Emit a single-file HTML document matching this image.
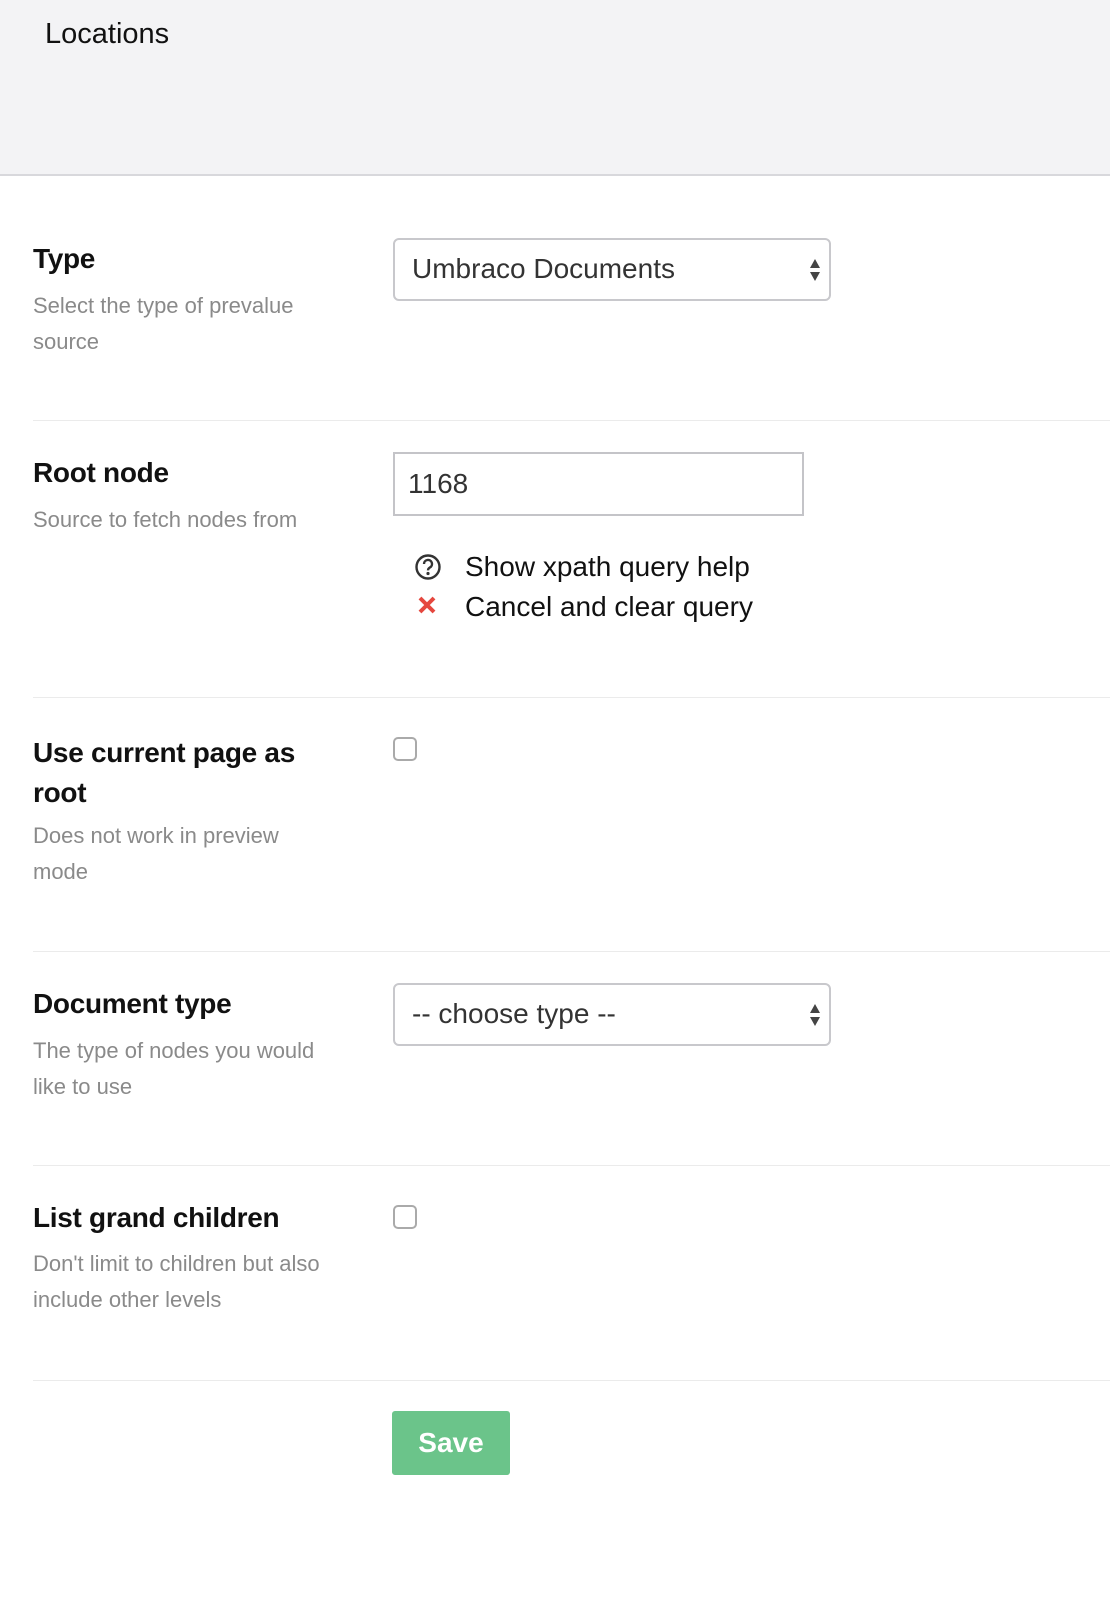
<!DOCTYPE html>
<html><head><meta charset="utf-8"><style>
*{box-sizing:border-box;margin:0;padding:0}
body{width:1110px;height:1602px;background:#fff;font-family:"Liberation Sans",sans-serif;color:#1b1b1b;position:relative;overflow:hidden}
.hdr{position:absolute;left:0;top:0;width:1110px;height:176px;background:#f3f3f5;border-bottom:2px solid #d8d8dc}
.hdr span{position:absolute;left:45px;top:18px;font-size:29px;color:#111}
.a{position:absolute;white-space:nowrap}
.lbl{font-size:28px;font-weight:bold;color:#111;letter-spacing:-0.3px}
.desc{font-size:22px;color:#8a8a8a;line-height:36px}
.sep{position:absolute;left:33px;right:0;height:1px;background:#ebebeb}
.sel{position:absolute;left:393px;width:438px;height:63px;border:2px solid #c8c8cc;border-radius:6px;font-size:28px;color:#333;padding:13px 0 0 17px}
.arr{position:absolute;right:8px;top:17px;width:12px;height:26px}
.cb{position:absolute;left:393px;width:24px;height:24px;border:2px solid #aaa;border-radius:5px}
.link{font-size:28px;color:#111}
</style></head><body>
<div class="hdr"><span>Locations</span></div>

<div class="a lbl" style="left:33px;top:243px">Type</div>
<div class="a desc" style="left:33px;top:288px">Select the type of prevalue<br>source</div>
<div class="sel" style="top:238px">Umbraco Documents<svg class="arr" viewBox="0 0 12 26"><path d="M6 2L11 11H1Z M6 24L11 15H1Z" fill="#444"/></svg></div>
<div class="sep" style="top:420px"></div>

<div class="a lbl" style="left:33px;top:457px">Root node</div>
<div class="a desc" style="left:33px;top:502px">Source to fetch nodes from</div>
<div class="a" style="left:393px;top:452px;width:411px;height:64px;border:2px solid #c4c4c8;font-size:28px;color:#333;padding:14px 0 0 13px">1168</div>
<svg class="a" style="left:414px;top:553px" width="28" height="28" viewBox="0 0 28 28"><circle cx="14" cy="14" r="11.5" fill="none" stroke="#333" stroke-width="2.4"/><path d="M10 11a4 4 0 1 1 6 3.4c-1.3.8-2 1.5-2 3" fill="none" stroke="#333" stroke-width="2.4"/><circle cx="14" cy="20.5" r="1.6" fill="#333"/></svg>
<svg class="a" style="left:418px;top:596px" width="18" height="18" viewBox="0 0 18 18"><path d="M2 2L16 16M16 2L2 16" stroke="#e5473e" stroke-width="4"/></svg>
<div class="a link" style="left:465px;top:551px">Show xpath query help</div>
<div class="a link" style="left:465px;top:591px">Cancel and clear query</div>
<div class="sep" style="top:697px"></div>

<div class="a lbl" style="left:33px;top:733px;line-height:40px">Use current page as<br>root</div>
<div class="cb" style="top:737px"></div>
<div class="a desc" style="left:33px;top:818px">Does not work in preview<br>mode</div>
<div class="sep" style="top:951px"></div>

<div class="a lbl" style="left:33px;top:988px">Document type</div>
<div class="a desc" style="left:33px;top:1033px">The type of nodes you would<br>like to use</div>
<div class="sel" style="top:983px">-- choose type --<svg class="arr" viewBox="0 0 12 26"><path d="M6 2L11 11H1Z M6 24L11 15H1Z" fill="#444"/></svg></div>
<div class="sep" style="top:1165px"></div>

<div class="a lbl" style="left:33px;top:1202px">List grand children</div>
<div class="cb" style="top:1205px"></div>
<div class="a desc" style="left:33px;top:1246px">Don't limit to children but also<br>include other levels</div>
<div class="sep" style="top:1380px"></div>

<div class="a" style="left:392px;top:1411px;width:118px;height:64px;background:#6bc48a;border-radius:3px;color:#fff;font-size:28px;font-weight:bold;text-align:center;line-height:64px">Save</div>
</body></html>
